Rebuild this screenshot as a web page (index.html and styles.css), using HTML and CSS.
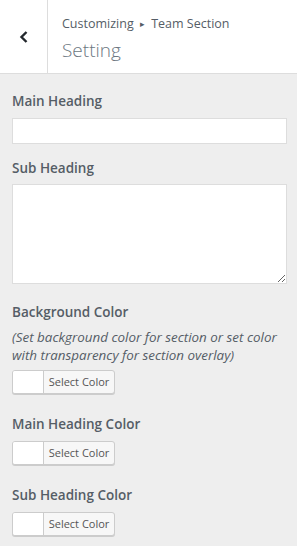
FILE: index.html
```html
<!DOCTYPE html>
<html lang="en">
<head>
    <meta charset="utf-8">
    <title>Customizing Team Section</title>
    <link rel="stylesheet" href="styles.css">
</head>
<body>

    <div class="panel-head">
        <button class="back" type="button" aria-label="Back">
            <svg width="10" height="12" viewBox="0 0 10 12">
                <path d="M7.5 1 L2.5 6 L7.5 11" fill="none" stroke="#23282d" stroke-width="2.4"/>
            </svg>
        </button>
        <div class="titles">
            <span class="crumb">Customizing <span class="arrow">&#9656;</span> Team Section</span>
            <h3 class="title">Setting</h3>
        </div>
    </div>

    <ul class="controls">
        <li class="control">
            <label class="label" for="main_heading">Main Heading</label>
            <input class="text" id="main_heading" type="text">
        </li>
        <li class="control">
            <label class="label" for="sub_heading">Sub Heading</label>
            <textarea class="area" id="sub_heading"></textarea>
        </li>
        <li class="control">
            <span class="label">Background Color</span>
            <span class="desc">(Set background color for section or set color with transparency for section overlay)</span>
            <button class="color" type="button"><span class="swatch"></span><span class="pick">Select Color</span></button>
        </li>
        <li class="control">
            <span class="label">Main Heading Color</span>
            <button class="color" type="button"><span class="swatch"></span><span class="pick">Select Color</span></button>
        </li>
        <li class="control">
            <span class="label">Sub Heading Color</span>
            <button class="color" type="button"><span class="swatch"></span><span class="pick">Select Color</span></button>
        </li>
    </ul>

</body>
</html>
```

FILE: styles.css
```css
html, body {
    margin: 0;
    padding: 0;
}
body {
    background: #eee;
    font-family: "Open Sans", "Noto Sans", sans-serif;
    color: #555d66;
}
.panel-head {
    display: flex;
    height: 73px;
    background: #fff;
    border-bottom: 1px solid #ddd;
}
.back {
    width: 48px;
    padding: 0;
    margin: 0;
    border: 0;
    border-right: 1px solid #ddd;
    background: #fff;
    display: flex;
    align-items: center;
    justify-content: center;
    cursor: pointer;
}
.titles {
    display: flex;
    flex-direction: column;
    padding: 14px 0 0 14px;
}
.crumb {
    font-size: 12.5px;
    line-height: 20px;
    color: #555d66;
}
.arrow {
    font-size: 9px;
    margin: 0 3px;
    vertical-align: 1px;
}
.title {
    margin: 2px 0 0;
    font-size: 19px;
    font-weight: 300;
    line-height: 28px;
    color: #6c7781;
}
.controls {
    list-style: none;
    margin: 0;
    padding: 17px 10px 0 12px;
}
.control {
    display: flex;
    flex-direction: column;
    margin-bottom: 14px;
}
.label {
    font-size: 13.5px;
    font-weight: 600;
    line-height: 20px;
    margin-bottom: 7px;
}
.text {
    box-sizing: border-box;
    height: 26px;
    margin: 0;
    border: 1px solid #ddd;
    background: #fff;
    outline: none;
}
.area {
    box-sizing: border-box;
    height: 100px;
    margin: -1px 0 4px;
    border: 1px solid #ddd;
    background: #fff;
    outline: none;
    resize: vertical;
}
.desc {
    font-size: 13.4px;
    font-style: italic;
    line-height: 18px;
    margin: -1px 0 6px;
}
.color {
    display: flex;
    align-self: flex-start;
    width: 103px;
    height: 24px;
    padding: 0;
    margin: 0 0 6px;
    border: 1px solid #ccc;
    border-radius: 3px;
    background: #f7f7f7;
    box-shadow: 0 1px 0 #ccc;
    overflow: hidden;
    cursor: pointer;
    font-family: inherit;
}
.swatch {
    width: 30px;
    height: 100%;
    background: #fff;
    border-right: 1px solid #ccc;
}
.pick {
    flex: 1;
    font-size: 11px;
    line-height: 22px;
    color: #555;
    text-align: center;
}
```
